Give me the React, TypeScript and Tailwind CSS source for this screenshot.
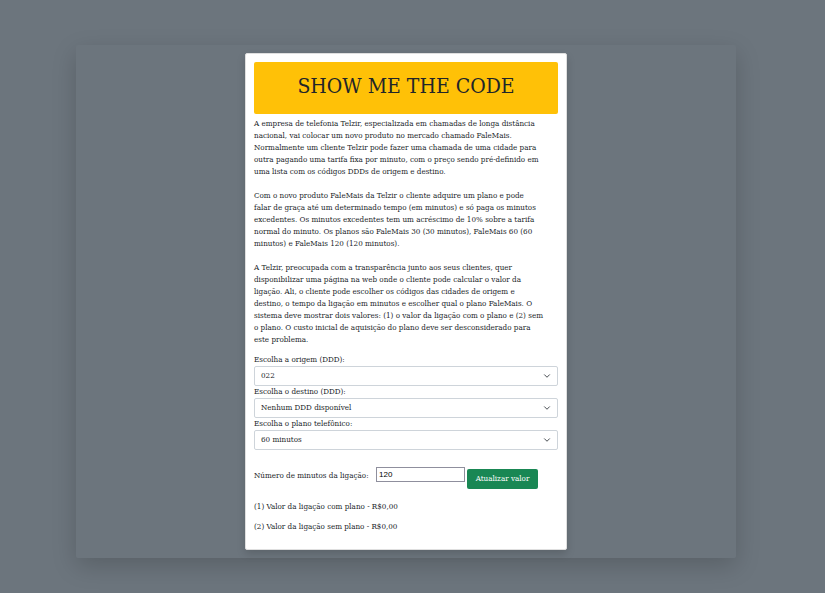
import { useState } from "react";
import type { ReactNode } from "react";

const chamada = [
  [
    "A empresa de telefonia Telzir, especializada em chamadas de longa distância",
    "nacional, vai colocar um novo produto no mercado chamado FaleMais.",
    "Normalmente um cliente Telzir pode fazer uma chamada de uma cidade para",
    "outra pagando uma tarifa fixa por minuto, com o preço sendo pré-definido em",
    "uma lista com os códigos DDDs de origem e destino.",
  ],
  [
    "Com o novo produto FaleMais da Telzir o cliente adquire um plano e pode",
    "falar de graça até um determinado tempo (em minutos) e só paga os minutos",
    "excedentes. Os minutos excedentes tem um acréscimo de 10% sobre a tarifa",
    "normal do minuto. Os planos são FaleMais 30 (30 minutos), FaleMais 60 (60",
    "minutos) e FaleMais 120 (120 minutos).",
  ],
  [
    "A Telzir, preocupada com a transparência junto aos seus clientes, quer",
    "disponibilizar uma página na web onde o cliente pode calcular o valor da",
    "ligação. Ali, o cliente pode escolher os códigos das cidades de origem e",
    "destino, o tempo da ligação em minutos e escolher qual o plano FaleMais. O",
    "sistema deve mostrar dois valores: (1) o valor da ligação com o plano e (2) sem",
    "o plano. O custo inicial de aquisição do plano deve ser desconsiderado para",
    "este problema.",
  ],
];

function SelectField({ id, label, children, value }: { id: string; label: string; value: string; children: ReactNode }) {
  return (
    <div>
      <label htmlFor={id} className="block">{label}</label>
      <div className="relative">
        <select
          id={id}
          defaultValue={value}
          className="block h-5 w-full appearance-none rounded-xs border border-[#ced4da] bg-white px-1.5 pr-5 leading-3"
        >
          {children}
        </select>
        <svg viewBox="0 0 16 16" className="pointer-events-none absolute top-1.5 right-[7px] size-2" fill="none" stroke="#343a40" strokeWidth="1.8" strokeLinecap="round" strokeLinejoin="round">
          <path d="m3 5.5 5 5 5-5" />
        </svg>
      </div>
    </div>
  );
}

export default function App() {
  const [minutos, setMinutos] = useState("120");
  return (
    <div className="min-h-screen bg-[#6c757d] pt-[45px] pr-[13px] pb-[35px] font-['DejaVu_Serif_Condensed','DejaVu_Serif',serif] text-[8px] leading-3 text-[#212529]">
      <main className="mx-auto w-full max-w-[660px] rounded-xs p-2 shadow-[0_8px_24px_rgba(0,0,0,0.175)]">
        <section className="mx-auto w-full max-w-[322px] rounded-xs border border-[#dfdfdf] bg-white p-2 shadow-[0_4px_8px_rgba(0,0,0,0.15)]">
          <header className="mb-1 rounded-xs bg-[#ffc107] px-2 pt-3 pb-4 text-center">
            <h1 className="text-[21px] leading-6 whitespace-nowrap">SHOW ME THE CODE</h1>
          </header>
          <div className="mb-2 flex flex-col gap-3">
            {chamada.map((linhas) => (
              <p key={linhas[0]}>
                {linhas.map((linha) => (
                  <span key={linha} className="block whitespace-nowrap">{linha}</span>
                ))}
              </p>
            ))}
          </div>
          <form onSubmit={(e) => e.preventDefault()}>
            <SelectField id="origem" label="Escolha a origem (DDD):" value="022">
              <option>022</option>
            </SelectField>
            <SelectField id="destino" label="Escolha o destino (DDD):" value="Nenhum DDD disponível">
              <option>Nenhum DDD disponível</option>
            </SelectField>
            <SelectField id="plano" label="Escolha o plano telefônico:" value="60 minutos">
              <option>30 minutos</option>
              <option>60 minutos</option>
              <option>120 minutos</option>
            </SelectField>
            <div className="mt-4 mb-3 flex items-start gap-0.5 whitespace-nowrap">
              <label htmlFor="minutos" className="w-[120px] pt-1">Número de minutos da ligação:</label>
              <input
                id="minutos"
                value={minutos}
                onChange={(e) => setMinutos(e.target.value)}
                className="mt-px h-[15px] w-[89px] border border-[#8f8f9d] bg-white px-0.5 font-['Liberation_Sans',sans-serif] text-[8px] text-black"
              />
              <button type="submit" className="mt-[3px] h-5 w-[71px] rounded-xs bg-[#198754] text-white">
                Atualizar valor
              </button>
            </div>
          </form>
          <p className="mb-2">(1) Valor da ligação com plano - R$0,00</p>
          <p className="mb-2">(2) Valor da ligação sem plano - R$0,00</p>
        </section>
      </main>
    </div>
  );
}
